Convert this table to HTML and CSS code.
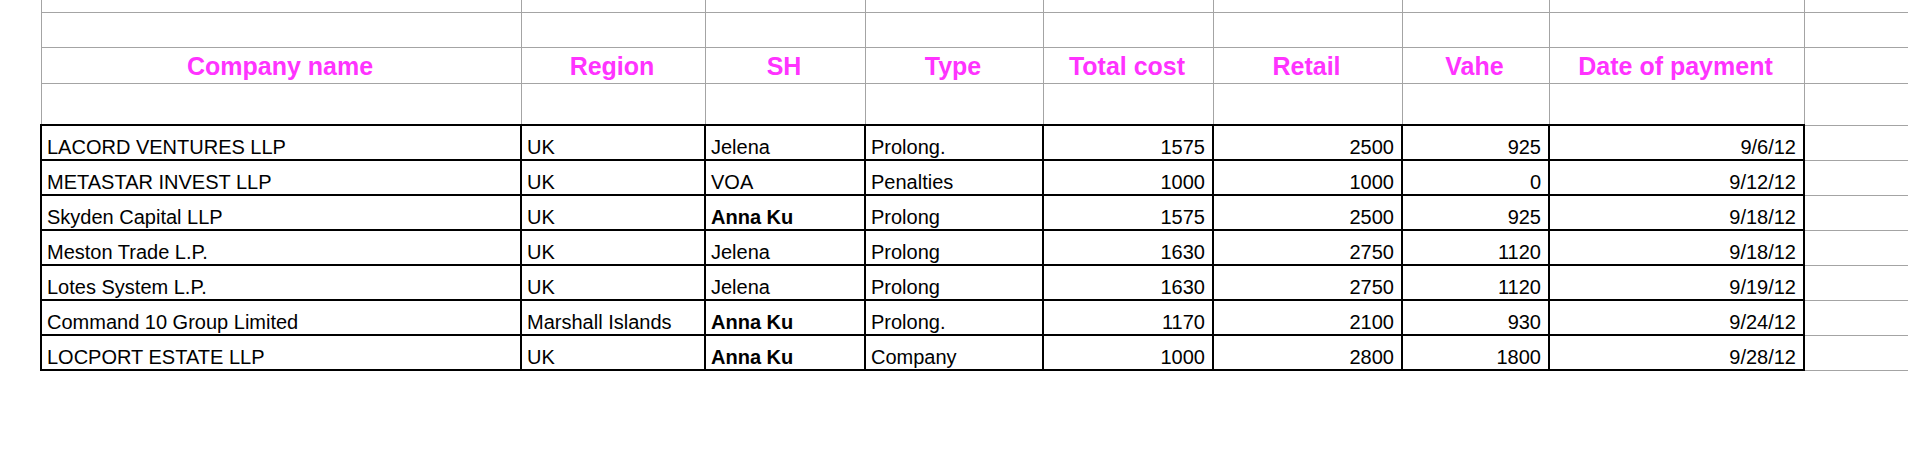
FILE: index.html
```html
<!DOCTYPE html>
<html>
<head>
<meta charset="utf-8">
<title>Payments</title>
<link rel="stylesheet" href="styles.css">
</head>
<body>
<table class="sheet">
  <colgroup>
    <col class="c-name"><col class="c-region"><col class="c-sh"><col class="c-type">
    <col class="c-total"><col class="c-retail"><col class="c-vahe"><col class="c-date"><col class="c-fill">
  </colgroup>
  <tbody>
    <tr class="r-top"><td></td><td></td><td></td><td></td><td></td><td></td><td></td><td></td><td class="fill"></td></tr>
    <tr class="r-blank"><td></td><td></td><td></td><td></td><td></td><td></td><td></td><td></td><td class="fill"></td></tr>
    <tr class="r-head">
      <td>Company name</td><td>Region</td><td>SH</td><td>Type</td><td>Total cost</td><td>Retail</td><td>Vahe</td><td>Date of payment</td><td class="fill"></td>
    </tr>
    <tr class="r-gap"><td></td><td></td><td></td><td></td><td></td><td></td><td></td><td></td><td class="fill"></td></tr>
    <tr class="r-data">
      <td>LACORD VENTURES LLP</td><td>UK</td><td>Jelena</td><td>Prolong.</td><td class="num">1575</td><td class="num">2500</td><td class="num">925</td><td class="num">9/6/12</td><td class="fill"></td>
    </tr>
    <tr class="r-data">
      <td>METASTAR INVEST LLP</td><td>UK</td><td>VOA</td><td>Penalties</td><td class="num">1000</td><td class="num">1000</td><td class="num">0</td><td class="num">9/12/12</td><td class="fill"></td>
    </tr>
    <tr class="r-data">
      <td>Skyden Capital LLP</td><td>UK</td><td class="strong">Anna Ku</td><td>Prolong</td><td class="num">1575</td><td class="num">2500</td><td class="num">925</td><td class="num">9/18/12</td><td class="fill"></td>
    </tr>
    <tr class="r-data">
      <td>Meston Trade L.P.</td><td>UK</td><td>Jelena</td><td>Prolong</td><td class="num">1630</td><td class="num">2750</td><td class="num">1120</td><td class="num">9/18/12</td><td class="fill"></td>
    </tr>
    <tr class="r-data">
      <td>Lotes System L.P.</td><td>UK</td><td>Jelena</td><td>Prolong</td><td class="num">1630</td><td class="num">2750</td><td class="num">1120</td><td class="num">9/19/12</td><td class="fill"></td>
    </tr>
    <tr class="r-data">
      <td>Command 10 Group Limited</td><td>Marshall Islands</td><td class="strong">Anna Ku</td><td>Prolong.</td><td class="num">1170</td><td class="num">2100</td><td class="num">930</td><td class="num">9/24/12</td><td class="fill"></td>
    </tr>
    <tr class="r-data">
      <td>LOCPORT ESTATE LLP</td><td>UK</td><td class="strong">Anna Ku</td><td>Company</td><td class="num">1000</td><td class="num">2800</td><td class="num">1800</td><td class="num">9/28/12</td><td class="fill"></td>
    </tr>
  </tbody>
</table>
</body>
</html>
```
FILE: styles.css
```css
html, body {
  margin: 0;
  padding: 0;
  background: #ffffff;
}

body {
  font-family: "Liberation Sans", Arial, sans-serif;
  color: #000;
  overflow: hidden;
}

.sheet {
  border-collapse: collapse;
  table-layout: fixed;
  width: 1868px;
  margin-left: 40px;
}

.c-name { width: 480px; }
.c-region { width: 184px; }
.c-sh { width: 160px; }
.c-type { width: 178px; }
.c-total { width: 170px; }
.c-retail { width: 189px; }
.c-vahe { width: 147px; }
.c-date { width: 255px; }
.c-fill { width: 105px; }

.sheet td {
  border: 1px solid #a4a4a4;
  padding: 0 7px 0 5px;
  white-space: nowrap;
  overflow: hidden;
  vertical-align: bottom;
}

.sheet td.fill {
  border-right: none;
}

.r-top td {
  border-top: none;
  height: 12px;
}

.r-blank td { height: 34px; }

.r-gap td { height: 40px; }

.r-head td {
  height: 33px;
  padding-bottom: 2px;
  text-align: center;
  font-size: 25px;
  line-height: 29px;
  font-weight: bold;
  color: #ff33ff;
}

.r-data td {
  height: 33px;
  font-size: 20px;
  line-height: 23px;
  border: 2px solid #000;
}

.r-data td.fill {
  border: 1px solid #a4a4a4;
  border-right: none;
}

.r-data td.num {
  text-align: right;
}

.r-data td.strong {
  font-weight: bold;
}
```
